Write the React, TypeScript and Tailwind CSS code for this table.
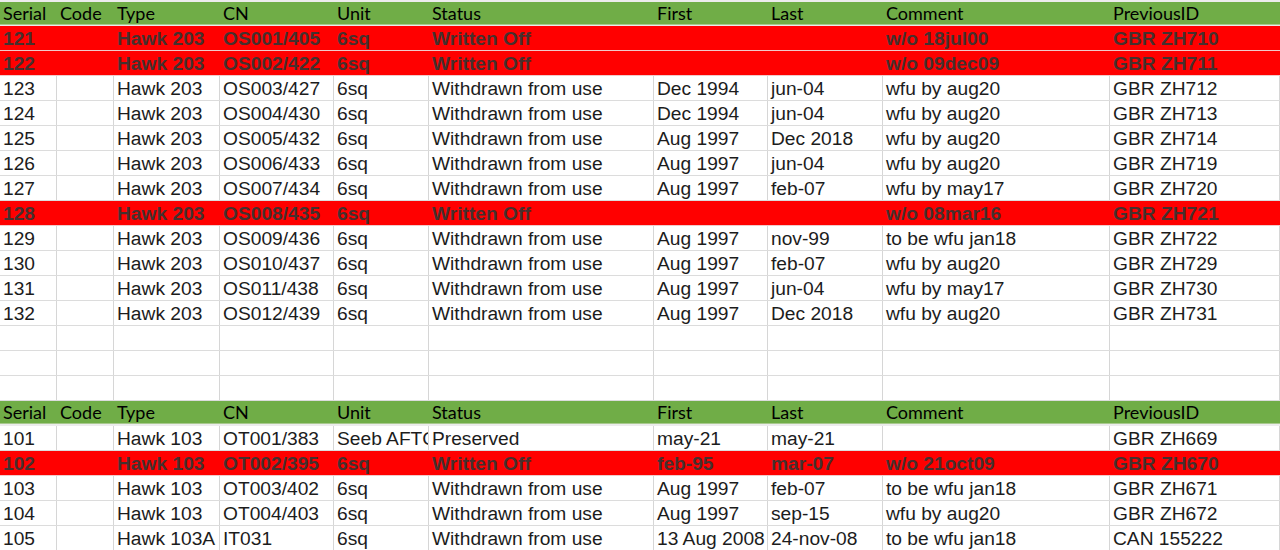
const cols = [
  "w-[57px]",
  "w-[57px]",
  "w-[106px]",
  "w-[114px]",
  "w-[95px]",
  "w-[225px]",
  "w-[114px]",
  "w-[115px]",
  "w-[227px]",
  "w-[170px]",
];

const headers = ["Serial", "Code", "Type", "CN", "Unit", "Status", "First", "Last", "Comment", "PreviousID"];

type Row = { cells: string[]; off?: boolean };

const tableOne: Row[] = [
  { cells: ["121", "", "Hawk 203", "OS001/405", "6sq", "Written Off", "", "", "w/o 18jul00", "GBR ZH710"], off: true },
  { cells: ["122", "", "Hawk 203", "OS002/422", "6sq", "Written Off", "", "", "w/o 09dec09", "GBR ZH711"], off: true },
  { cells: ["123", "", "Hawk 203", "OS003/427", "6sq", "Withdrawn from use", "Dec 1994", "jun-04", "wfu by aug20", "GBR ZH712"] },
  { cells: ["124", "", "Hawk 203", "OS004/430", "6sq", "Withdrawn from use", "Dec 1994", "jun-04", "wfu by aug20", "GBR ZH713"] },
  { cells: ["125", "", "Hawk 203", "OS005/432", "6sq", "Withdrawn from use", "Aug 1997", "Dec 2018", "wfu by aug20", "GBR ZH714"] },
  { cells: ["126", "", "Hawk 203", "OS006/433", "6sq", "Withdrawn from use", "Aug 1997", "jun-04", "wfu by aug20", "GBR ZH719"] },
  { cells: ["127", "", "Hawk 203", "OS007/434", "6sq", "Withdrawn from use", "Aug 1997", "feb-07", "wfu by may17", "GBR ZH720"] },
  { cells: ["128", "", "Hawk 203", "OS008/435", "6sq", "Written Off", "", "", "w/o 08mar16", "GBR ZH721"], off: true },
  { cells: ["129", "", "Hawk 203", "OS009/436", "6sq", "Withdrawn from use", "Aug 1997", "nov-99", "to be wfu jan18", "GBR ZH722"] },
  { cells: ["130", "", "Hawk 203", "OS010/437", "6sq", "Withdrawn from use", "Aug 1997", "feb-07", "wfu by aug20", "GBR ZH729"] },
  { cells: ["131", "", "Hawk 203", "OS011/438", "6sq", "Withdrawn from use", "Aug 1997", "jun-04", "wfu by may17", "GBR ZH730"] },
  { cells: ["132", "", "Hawk 203", "OS012/439", "6sq", "Withdrawn from use", "Aug 1997", "Dec 2018", "wfu by aug20", "GBR ZH731"] },
];

const tableTwo: Row[] = [
  { cells: ["101", "", "Hawk 103", "OT001/383", "Seeb AFTC", "Preserved", "may-21", "may-21", "", "GBR ZH669"] },
  { cells: ["102", "", "Hawk 103", "OT002/395", "6sq", "Written Off", "feb-95", "mar-07", "w/o 21oct09", "GBR ZH670"], off: true },
  { cells: ["103", "", "Hawk 103", "OT003/402", "6sq", "Withdrawn from use", "Aug 1997", "feb-07", "to be wfu jan18", "GBR ZH671"] },
  { cells: ["104", "", "Hawk 103", "OT004/403", "6sq", "Withdrawn from use", "Aug 1997", "sep-15", "wfu by aug20", "GBR ZH672"] },
  { cells: ["105", "", "Hawk 103A", "IT031", "6sq", "Withdrawn from use", "13 Aug 2008", "24-nov-08", "to be wfu jan18", "CAN 155222"] },
];

const HeaderRow = ({ first }: { first?: boolean }) => (
  <div className={`flex ${first ? "h-[26px] pt-[2px]" : "h-[25px]"} bg-[#ececec]`}>
    <div className="flex w-full h-[23px] bg-[#70ad47] border-b-[1px] border-[#a8c98e]">
      {headers.map((h, i) => (
        <div
          key={h}
          className={`${cols[i]} shrink-0 pl-[3px] text-[18px] leading-[23px] text-black font-['Lato','Open_Sans',sans-serif]`}
        >
          {h}
        </div>
      ))}
    </div>
  </div>
);

const DataRow = ({ row }: { row: Row }) =>
  row.off ? (
    <div className="flex items-start h-[25px] bg-[#ff0000] border-b-[1px] border-[#f1c9c9]">
      {row.cells.map((c, i) => (
        <div
          key={i}
          className={`${cols[i]} h-[24px] shrink-0 pl-[3px] overflow-hidden whitespace-nowrap text-[19.2px] leading-[26px] font-bold text-[#45302e]`}
        >
          {c}
        </div>
      ))}
    </div>
  ) : (
    <div className="flex items-start h-[25px] bg-white border-b-[1px] border-[#dcdcdc]">
      {row.cells.map((c, i) => (
        <div
          key={i}
          className={`${cols[i]} h-[24px] shrink-0 pl-[3px] border-r-[1px] border-[#d6d6d6] overflow-hidden whitespace-nowrap text-[19.2px] leading-[26px] text-[#1c1c1c]`}
        >
          {c}
        </div>
      ))}
    </div>
  );

const EmptyRow = () => (
  <div className="flex h-[25px] bg-white border-b-[1px] border-[#dcdcdc]">
    {cols.map((w, i) => (
      <div key={i} className={`${w} shrink-0 border-r-[1px] border-[#d6d6d6]`} />
    ))}
  </div>
);

export default function App() {
  return (
    <div className="w-[1280px] h-[550px] overflow-hidden bg-white font-['Liberation_Sans',Arial,sans-serif]">
      {/* First block */}
      <HeaderRow first />
      {tableOne.map((r) => (
        <DataRow key={r.cells[0]} row={r} />
      ))}

      {/* Spacer rows */}
      <EmptyRow />
      <EmptyRow />
      <EmptyRow />

      {/* Second block */}
      <HeaderRow />
      {tableTwo.map((r) => (
        <DataRow key={r.cells[0]} row={r} />
      ))}
    </div>
  );
}
